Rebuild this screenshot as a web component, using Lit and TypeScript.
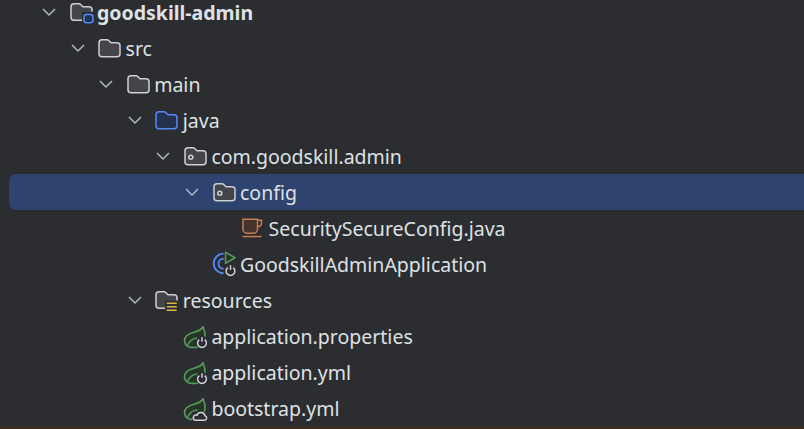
import { LitElement, html, css, svg } from "lit";
import { customElement } from "lit/decorators.js";

const folderPath = "M1 5a3 3 0 0 1 3-3h5c.7 0 1.2.2 1.7.7L13 5h6a3 3 0 0 1 3 3v8a3 3 0 0 1-3 3H4a3 3 0 0 1-3-3z";
const power = (x: number, y: number) => svg`
  <path d="M${x - 2.8} ${y - 2.6}a4.4 4.4 0 1 0 5.6 0" fill="none" stroke="#ced0d6" stroke-width="1.5"/>
  <path d="M${x} ${y - 5}v4.6" stroke="#ced0d6" stroke-width="1.5"/>`;
const leaf = svg`
  <path d="M19 1C17.500 4 14 5.500 10 6.500 4 8 .5 11 .5 15c0 4 3.500 6.700 7 6.700h5c4-1 8-5 8.500-10 .3-3.500-.5-7.500-2-10.700z" fill="#253627" stroke="#57965c" stroke-width="1.7" stroke-linejoin="round"/>
  <path d="M3.500 20.500c1-4.500 4.500-7.500 10-8.500" fill="none" stroke="#57965c" stroke-width="1.5"/>`;

const icons: Record<string, unknown> = {
  module: svg`
    <path d="M12 18.500H4a3 3 0 0 1-3-3V5a3 3 0 0 1 3-3h5c.7 0 1.200.2 1.700.7L13 5h6a3 3 0 0 1 3 3v4" fill="#43454a" stroke="#ced0d6" stroke-width="1.5"/>
    <path d="M12 10h13v14H12z" fill="#2b2d30"/>
    <rect x="14" y="12.750" width="9" height="8.250" rx="2.5" fill="#25324d" stroke="#548af7" stroke-width="1.5"/>`,
  folder: svg`<path d="${folderPath}" fill="#43454a" stroke="#ced0d6" stroke-width="1.5"/>`,
  source: svg`<path d="${folderPath}" fill="#25324d" stroke="#548af7" stroke-width="1.5"/>`,
  pkg: svg`
    <path d="${folderPath}" fill="#43454a" stroke="#ced0d6" stroke-width="1.5"/>
    <circle cx="6.800" cy="11.500" r="2" fill="none" stroke="#ced0d6" stroke-width="1.5"/>`,
  java: svg`
    <path d="M2 1.500h14.500v10a4 4 0 0 1-4 4H6a4 4 0 0 1-4-4z" fill="#45322b" stroke="#c77d55" stroke-width="1.5"/>
    <path d="M16.500 2.500h4v3a3 3 0 0 1-4 3" fill="none" stroke="#c77d55" stroke-width="1.5"/>
    <path d="M1.500 18.800h19" stroke="#c77d55" stroke-width="1.5"/>`,
  app: svg`
    <path d="M10.500 19.500a9.800 9.800 0 1 1 0-19.600" fill="none" stroke="#548af7" stroke-width="1.8"/>
    <path d="M10.500 15a5 5 0 1 1 0-10" fill="none" stroke="#548af7" stroke-width="1.8"/>
    <path d="M12.500-1.500l9.500 5.500-9.500 5.500z" fill="#253627" stroke="#57965c" stroke-width="1.5" stroke-linejoin="round"/>
    <circle cx="17.500" cy="16.500" r="6.500" fill="#2b2d30"/>
    ${power(17.5, 16.5)}`,
  resources: svg`
    <path d="M10 18.500H4a3 3 0 0 1-3-3V5a3 3 0 0 1 3-3h5c.7 0 1.200.2 1.700.7L13 5h6a3 3 0 0 1 3 3v3" fill="#43454a" stroke="#ced0d6" stroke-width="1.5"/>
    <path d="M10 11h14v12H10z" fill="#2b2d30"/>
    <path d="M11.700 13.500h10M11.700 17h10M11.700 20.500h10" stroke="#e0b44c" stroke-width="1.5"/>`,
  spring: svg`${leaf}
    <circle cx="18" cy="16.500" r="6.500" fill="#2b2d30"/>
    ${power(18, 16.5)}`,
  bootstrap: svg`${leaf}
    <path d="M8 14h17v10H8z" fill="#2b2d30"/>
    <path d="M11 22.500h9.500a2.300 2.300 0 0 0 .5-4.500 4.200 4.200 0 0 0-8-.5 2.600 2.600 0 0 0-2 5z" fill="none" stroke="#ced0d6" stroke-width="1.5"/>`,
};

interface Row { depth: number; icon: string; label: string; open?: boolean; selected?: boolean; bold?: boolean; }

const rows: Row[] = [
  { depth: 0, icon: "module", label: "goodskill-admin", open: true, bold: true },
  { depth: 1, icon: "folder", label: "src", open: true },
  { depth: 2, icon: "folder", label: "main", open: true },
  { depth: 3, icon: "source", label: "java", open: true },
  { depth: 4, icon: "pkg", label: "com.goodskill.admin", open: true },
  { depth: 5, icon: "pkg", label: "config", open: true, selected: true },
  { depth: 6, icon: "java", label: "SecuritySecureConfig.java" },
  { depth: 5, icon: "app", label: "GoodskillAdminApplication" },
  { depth: 3, icon: "resources", label: "resources", open: true },
  { depth: 4, icon: "spring", label: "application.properties" },
  { depth: 4, icon: "spring", label: "application.yml" },
  { depth: 4, icon: "bootstrap", label: "bootstrap.yml" },
];

@customElement("app-root")
export class AppRoot extends LitElement {
  static styles = css`
    :host {
      display: flex;
      flex-direction: column;
      height: 429px;
      overflow: hidden;
      background: #2b2d30;
      font-family: "Noto Sans", "Liberation Sans", sans-serif;
      font-size: 19.5px;
      color: #dfe1e5;
    }
    .tree { margin-top: -6px; flex: none; }
    .row {
      display: flex;
      align-items: center;
      height: 36px;
      margin-left: 9px;
      border-radius: 7px 0 0 7px;
      white-space: nowrap;
    }
    .row.selected { background: #2e436e; }
    .arrow { flex: none; width: 22px; height: 22px; margin-right: 9.5px; }
    .arrow path { fill: none; stroke: #b4b8bf; stroke-width: 1.5; }
    .icon { flex: none; width: 24px; height: 24px; margin-right: 3.5px; overflow: visible; }
    .bold { font-weight: 700; }
    .strip { flex: 1; background: #3a2f26; }
  `;

  render() {
    return html`
      <div class="tree">
        ${rows.map((r) => html`
          <div class="row ${r.selected ? "selected" : ""}" style="padding-left:${29 + r.depth * 28.6}px">
            <svg class="arrow" viewBox="0 0 22 22">
              ${r.open ? svg`<path d="M5 8l6 6 6-6"/>` : ""}
            </svg>
            <svg class="icon" viewBox="0 -1.75 24 24">${icons[r.icon]}</svg>
            <span class="${r.bold ? "bold" : ""}">${r.label}</span>
          </div>`)}
      </div>
      <div class="strip"></div>
    `;
  }
}
